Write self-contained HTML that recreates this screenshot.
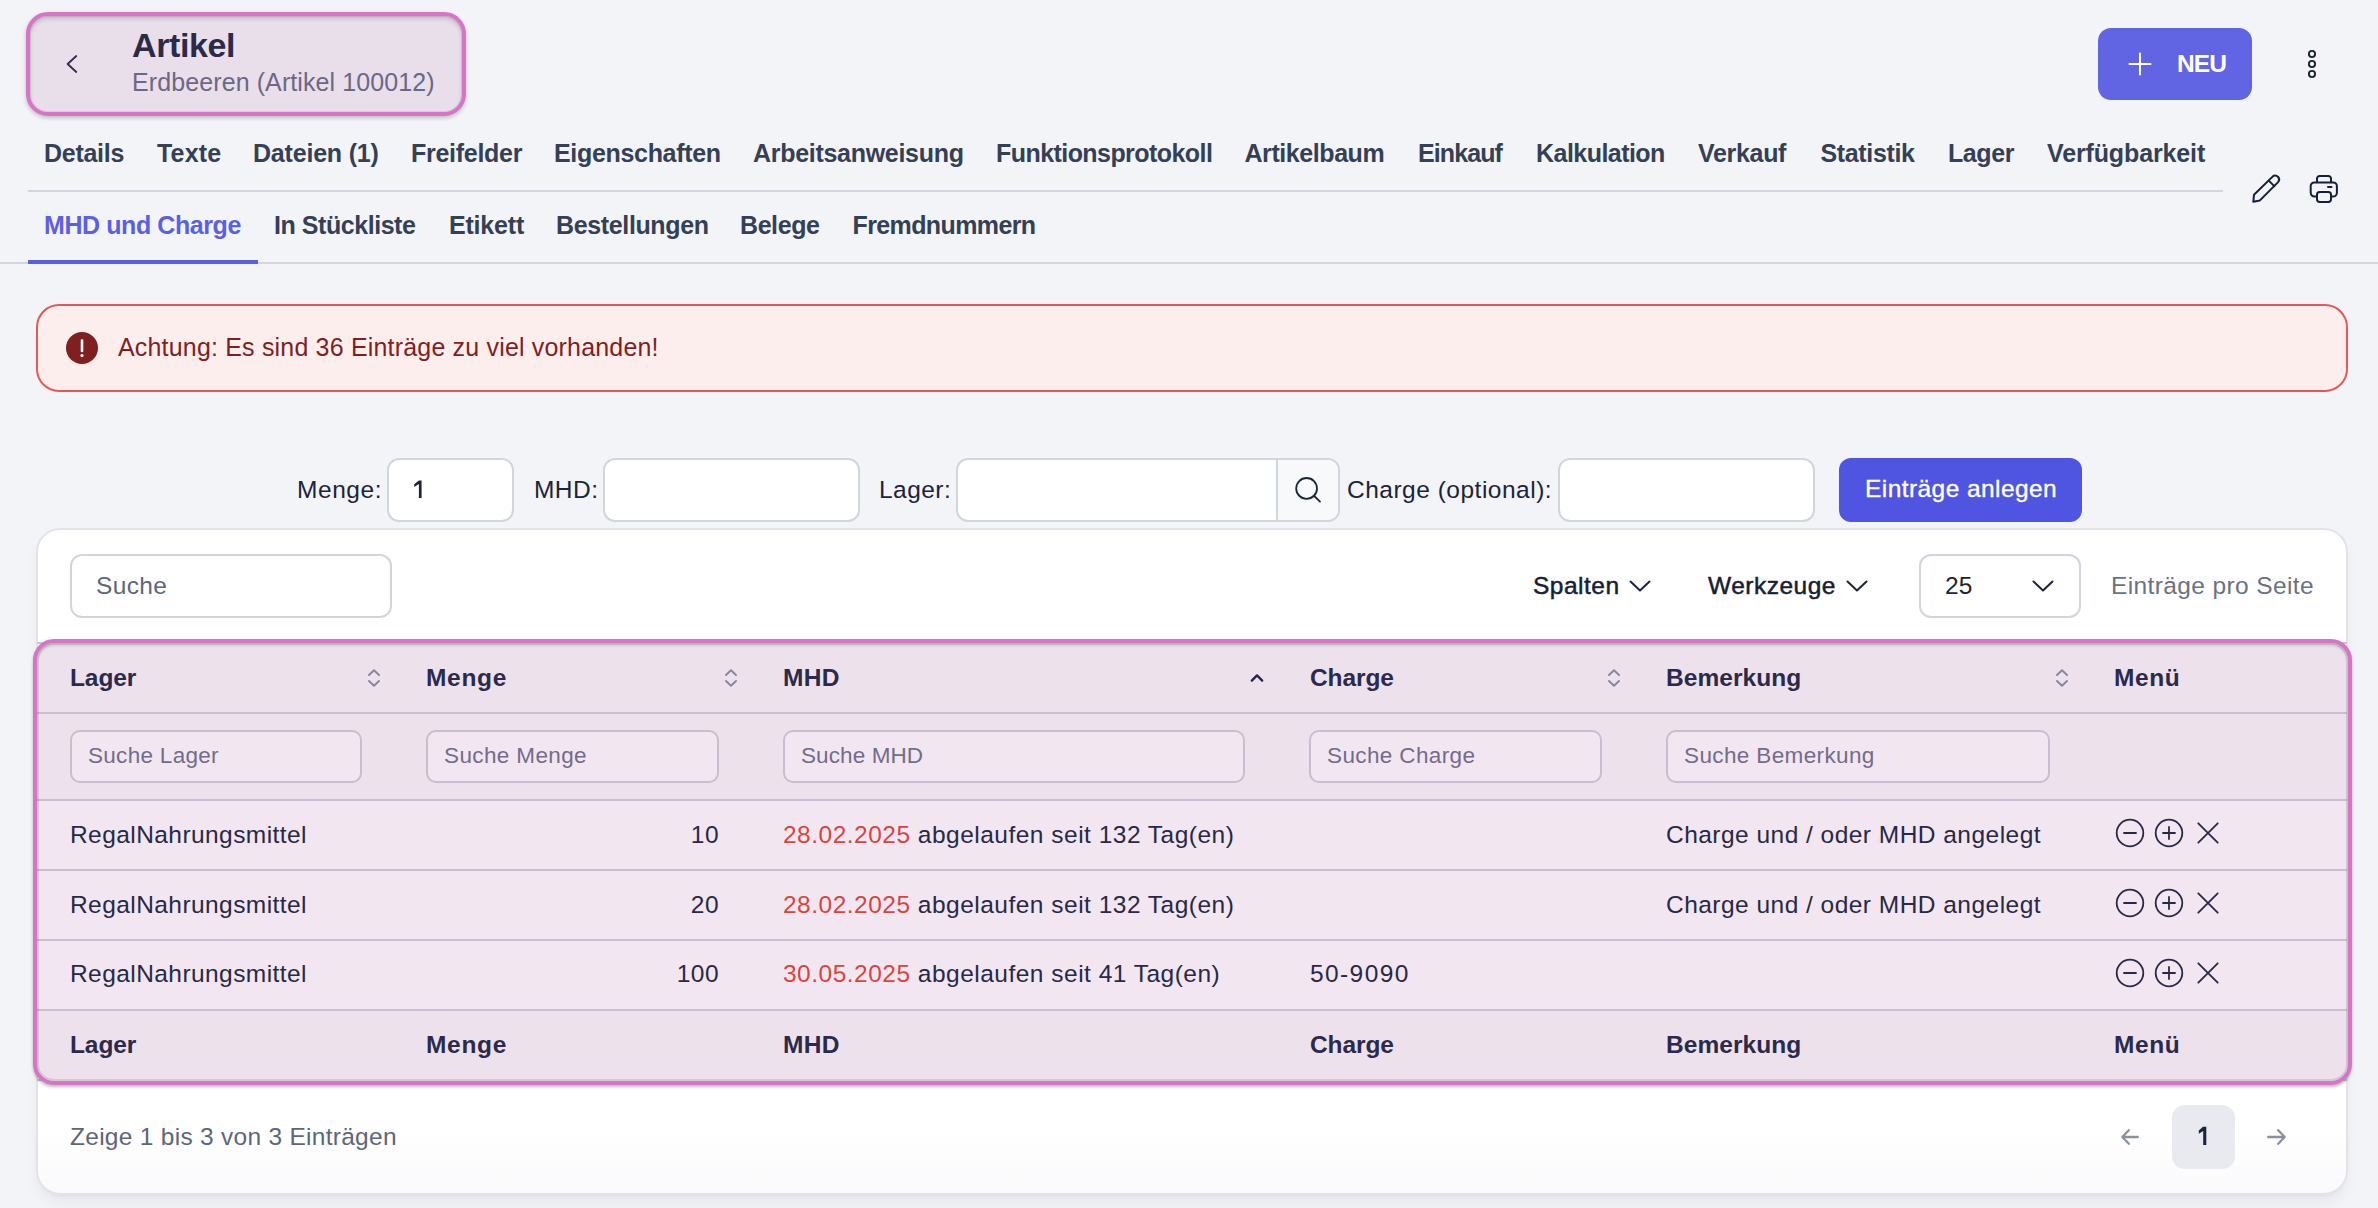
<!DOCTYPE html>
<html><head><meta charset="utf-8"><style>
html,body{margin:0;padding:0;}
body{width:2378px;height:1208px;overflow:hidden;background:#f3f4f8;position:relative;font-family:"Liberation Sans",sans-serif;}
.t{position:absolute;line-height:1;white-space:nowrap;}
svg{position:absolute;overflow:visible;}
</style></head><body>
<div style="position:absolute;left:26px;top:12px;width:440px;height:104px;box-sizing:border-box;border:4px solid #d874c7;border-radius:22px;background:#e8dfeb;box-shadow:0 2px 4px rgba(0,0,0,.22), inset 0 0 0 1px rgba(90,80,110,.12), inset 0 3px 4px rgba(0,0,0,.16);"></div>
<svg style="left:0;top:0" width="100" height="100" viewBox="0 0 100 100"><path d="M76.3 56 L67.6 64 L76.3 72" fill="none" stroke="#2f2c4a" stroke-width="1.8" stroke-linecap="round" stroke-linejoin="round"/></svg>
<div class="t" style="left:132px;top:28.22px;font-size:34px;color:#2d2a47;font-weight:700;letter-spacing:-0.4px;">Artikel</div>
<div class="t" style="left:132px;top:69.64px;font-size:25px;color:#6d6785;letter-spacing:0.1px;">Erdbeeren (Artikel 100012)</div>
<div style="position:absolute;left:2098px;top:28px;width:154px;height:72px;box-sizing:border-box;background:#6165e3;border-radius:13px;"></div>
<svg style="left:2120px;top:44px" width="40" height="40" viewBox="0 0 40 40"><path d="M20 9.5V30.5M9.5 20H30.5" stroke="#fff" stroke-width="2" stroke-linecap="round"/></svg>
<div class="t" style="left:2177px;top:51.76px;font-size:24.5px;color:#ffffff;font-weight:700;letter-spacing:-0.9px;">NEU</div>
<svg style="left:2300px;top:44px" width="24" height="40" viewBox="0 0 24 40"><g fill="none" stroke="#1a2236" stroke-width="1.9"><circle cx="12" cy="10" r="3.1"/><circle cx="12" cy="20" r="3.1"/><circle cx="12" cy="30" r="3.1"/></g></svg>
<div class="t" style="left:44px;top:141.24px;font-size:25px;color:#344055;font-weight:700;letter-spacing:-0.27px;">Details</div>
<div class="t" style="left:157px;top:141.24px;font-size:25px;color:#344055;font-weight:700;letter-spacing:0.17px;">Texte</div>
<div class="t" style="left:253px;top:141.24px;font-size:25px;color:#344055;font-weight:700;letter-spacing:-0.2px;">Dateien (1)</div>
<div class="t" style="left:411px;top:141.24px;font-size:25px;color:#344055;font-weight:700;letter-spacing:-0.28px;">Freifelder</div>
<div class="t" style="left:554px;top:141.24px;font-size:25px;color:#344055;font-weight:700;letter-spacing:-0.32px;">Eigenschaften</div>
<div class="t" style="left:753px;top:141.24px;font-size:25px;color:#344055;font-weight:700;letter-spacing:-0.29px;">Arbeitsanweisung</div>
<div class="t" style="left:996px;top:141.24px;font-size:25px;color:#344055;font-weight:700;letter-spacing:-0.56px;">Funktionsprotokoll</div>
<div class="t" style="left:1244.5px;top:141.24px;font-size:25px;color:#344055;font-weight:700;letter-spacing:-0.43px;">Artikelbaum</div>
<div class="t" style="left:1418px;top:141.24px;font-size:25px;color:#344055;font-weight:700;letter-spacing:-0.9px;">Einkauf</div>
<div class="t" style="left:1536px;top:141.24px;font-size:25px;color:#344055;font-weight:700;letter-spacing:-0.54px;">Kalkulation</div>
<div class="t" style="left:1698px;top:141.24px;font-size:25px;color:#344055;font-weight:700;letter-spacing:-0.32px;">Verkauf</div>
<div class="t" style="left:1820.5px;top:141.24px;font-size:25px;color:#344055;font-weight:700;letter-spacing:-0.35px;">Statistik</div>
<div class="t" style="left:1948px;top:141.24px;font-size:25px;color:#344055;font-weight:700;letter-spacing:-0.42px;">Lager</div>
<div class="t" style="left:2047px;top:141.24px;font-size:25px;color:#344055;font-weight:700;letter-spacing:-0.13px;">Verfügbarkeit</div>
<div style="position:absolute;left:28px;top:190px;width:2195px;height:2px;box-sizing:border-box;background:#d2d5dd;"></div>
<div class="t" style="left:44px;top:213.24px;font-size:25px;color:#5b5fe3;font-weight:700;letter-spacing:-0.42px;">MHD und Charge</div>
<div class="t" style="left:274px;top:213.24px;font-size:25px;color:#344055;font-weight:700;letter-spacing:-0.45px;">In Stückliste</div>
<div class="t" style="left:449px;top:213.24px;font-size:25px;color:#344055;font-weight:700;letter-spacing:-0.2px;">Etikett</div>
<div class="t" style="left:556px;top:213.24px;font-size:25px;color:#344055;font-weight:700;letter-spacing:-0.36px;">Bestellungen</div>
<div class="t" style="left:740px;top:213.24px;font-size:25px;color:#344055;font-weight:700;letter-spacing:-0.42px;">Belege</div>
<div class="t" style="left:852.5px;top:213.24px;font-size:25px;color:#344055;font-weight:700;letter-spacing:-0.61px;">Fremdnummern</div>
<div style="position:absolute;left:0px;top:262px;width:2378px;height:2px;box-sizing:border-box;background:#d3d6de;"></div>
<div style="position:absolute;left:28px;top:260px;width:230px;height:4px;box-sizing:border-box;background:#5b5fe3;"></div>
<svg style="left:2240px;top:160px" width="110" height="55" viewBox="0 0 110 55"><g fill="none" stroke="#14203a" stroke-width="2" stroke-linejoin="round" stroke-linecap="round">
<path d="M14 34.8 L32.6 16.6 A3.9 3.9 0 0 1 38.1 22.1 L19.9 40.4 L13.3 41.8 Z"/><path d="M28.8 20.6 L34.3 26.1"/>
<path d="M77 22.3 V18.6 A2.7 2.7 0 0 1 79.7 15.9 H88.3 A2.7 2.7 0 0 1 91 18.6 V22.3"/>
<path d="M77 36.6 H74.5 A3.8 3.8 0 0 1 70.7 32.8 V26.1 A3.6 3.6 0 0 1 74.3 22.5 H93.3 A3.6 3.6 0 0 1 96.9 26.1 V32.8 A3.8 3.8 0 0 1 93.1 36.6 H91"/>
<rect x="77" y="31.9" width="14" height="10" rx="2.7"/>
<path d="M88 27 H91.5"/>
</g></svg>
<div style="position:absolute;left:36px;top:304px;width:2312px;height:88px;box-sizing:border-box;border:2px solid #e05a5a;border-radius:23px;background:#fdeeee;"></div>
<svg style="left:66px;top:332px" width="32" height="32" viewBox="0 0 32 32"><circle cx="16" cy="16" r="16" fill="#7f1f1f"/><path d="M16 8.5V19" stroke="#fff" stroke-width="2.6" stroke-linecap="round"/><circle cx="16" cy="23.6" r="1.6" fill="#fff"/></svg>
<div class="t" style="left:118px;top:335.34px;font-size:25px;color:#7f1f1f;letter-spacing:0.18px;">Achtung: Es sind 36 Einträge zu viel vorhanden!</div>
<div class="t" style="left:297px;top:477.76px;font-size:24.5px;color:#1b2438;letter-spacing:0.55px;">Menge:</div>
<div style="position:absolute;left:387px;top:458px;width:127px;height:64px;box-sizing:border-box;background:#fff;border:2px solid #d1d5dc;border-radius:12px;"></div>
<svg style="left:0;top:0" width="700" height="600" viewBox="0 0 700 600"><path d="M421.6 480.5 V497.9 H418.9 V483.9 L414.2 487 V484.3 L418.9 480.5 Z" fill="#1b2438"/></svg>
<div class="t" style="left:534px;top:477.76px;font-size:24.5px;color:#1b2438;letter-spacing:0.45px;">MHD:</div>
<div style="position:absolute;left:603px;top:458px;width:257px;height:64px;box-sizing:border-box;background:#fff;border:2px solid #d1d5dc;border-radius:12px;"></div>
<div class="t" style="left:879px;top:477.76px;font-size:24.5px;color:#1b2438;letter-spacing:0.45px;">Lager:</div>
<div style="position:absolute;left:956px;top:458px;width:384px;height:64px;box-sizing:border-box;background:#fff;border:2px solid #d1d5dc;border-radius:12px;overflow:hidden;"></div>
<div style="position:absolute;left:1276px;top:460px;width:62px;height:60px;box-sizing:border-box;background:#f8f9fb;border-left:2px solid #d1d5dc;border-radius:0 10px 10px 0;"></div>
<svg style="left:1290px;top:472px" width="36" height="36" viewBox="0 0 36 36"><g fill="none" stroke="#1b2438" stroke-width="1.8" stroke-linecap="round"><circle cx="16.6" cy="16.4" r="10.4"/><path d="M24.2 24 L30 29.6"/></g></svg>
<div class="t" style="left:1347px;top:477.76px;font-size:24.5px;color:#1b2438;letter-spacing:0.5px;">Charge (optional):</div>
<div style="position:absolute;left:1558px;top:458px;width:257px;height:64px;box-sizing:border-box;background:#fff;border:2px solid #d1d5dc;border-radius:12px;"></div>
<div style="position:absolute;left:1839px;top:458px;width:243px;height:64px;box-sizing:border-box;background:#4f55e0;border-radius:12px;"></div>
<div class="t" style="left:1865px;top:477.46px;font-size:24.5px;color:#ffffff;letter-spacing:0.43px;-webkit-text-stroke:0.35px #fff;">Einträge anlegen</div>
<div style="position:absolute;left:36px;top:528px;width:2312px;height:667px;box-sizing:border-box;background:linear-gradient(to bottom,#fff 0,#fff 600px,#fafafc 100%);border:2px solid #e1e3e9;border-radius:24px;box-shadow:0 10px 15px -3px rgba(0,0,0,.06), 0 2px 3px -1px rgba(0,0,0,.04);"></div>
<div style="position:absolute;left:70px;top:554px;width:322px;height:64px;box-sizing:border-box;background:#fff;border:2px solid #d1d5dc;border-radius:12px;"></div>
<div class="t" style="left:96px;top:573.76px;font-size:24.5px;color:#5d6679;letter-spacing:0.37px;">Suche</div>
<div class="t" style="left:1533px;top:573.76px;font-size:24.5px;color:#172033;letter-spacing:0.5px;-webkit-text-stroke:0.5px #172033;">Spalten</div>
<svg style="left:1628px;top:578px" width="24" height="16" viewBox="0 0 24 16"><path d="M2.5 3.5 L12 12.5 L21.5 3.5" fill="none" stroke="#1b2438" stroke-width="2" stroke-linecap="round" stroke-linejoin="round"/></svg>
<div class="t" style="left:1708px;top:573.76px;font-size:24.5px;color:#172033;letter-spacing:0.5px;-webkit-text-stroke:0.5px #172033;">Werkzeuge</div>
<svg style="left:1845px;top:578px" width="24" height="16" viewBox="0 0 24 16"><path d="M2.5 3.5 L12 12.5 L21.5 3.5" fill="none" stroke="#1b2438" stroke-width="2" stroke-linecap="round" stroke-linejoin="round"/></svg>
<div style="position:absolute;left:1919px;top:554px;width:162px;height:64px;box-sizing:border-box;background:#fff;border:2px solid #d1d5dc;border-radius:12px;"></div>
<div class="t" style="left:1945px;top:573.76px;font-size:24.5px;color:#1b2438;">25</div>
<svg style="left:2031px;top:578px" width="24" height="16" viewBox="0 0 24 16"><path d="M2.5 3.5 L12 12.5 L21.5 3.5" fill="none" stroke="#1b2438" stroke-width="2" stroke-linecap="round" stroke-linejoin="round"/></svg>
<div class="t" style="left:2111px;top:573.76px;font-size:24.5px;color:#6a7282;letter-spacing:0.38px;">Einträge pro Seite</div>
<div style="position:absolute;left:37px;top:642px;width:2310px;height:2px;box-sizing:border-box;background:#c6c8d0;"></div>
<div style="position:absolute;left:37px;top:1079px;width:2310px;height:2px;box-sizing:border-box;background:#c6c8d0;"></div>
<div style="position:absolute;left:33px;top:639px;width:2319px;height:446px;box-sizing:border-box;border:4px solid #d874c7;border-radius:21px;background:#ede2eb;box-shadow:0 2px 3px rgba(0,0,0,.26);overflow:hidden;"></div>
<div style="position:absolute;left:37px;top:801px;width:2310px;height:208px;box-sizing:border-box;background:#f2e7f1;"></div>
<div style="position:absolute;left:37px;top:712px;width:2310px;height:2px;box-sizing:border-box;background:#cabfd0;"></div>
<div style="position:absolute;left:37px;top:799px;width:2310px;height:2px;box-sizing:border-box;background:#cabfd0;"></div>
<div style="position:absolute;left:37px;top:869px;width:2310px;height:2px;box-sizing:border-box;background:#cabfd0;"></div>
<div style="position:absolute;left:37px;top:939px;width:2310px;height:2px;box-sizing:border-box;background:#cabfd0;"></div>
<div style="position:absolute;left:37px;top:1009px;width:2310px;height:2px;box-sizing:border-box;background:#cabfd0;"></div>
<div style="position:absolute;left:37px;top:643px;width:2311px;height:438px;box-sizing:border-box;border-radius:17px;box-shadow:inset 0 0 0 2px rgba(80,70,100,.16), inset 0 3px 3px rgba(0,0,0,.12);"></div>
<div class="t" style="left:70px;top:665.76px;font-size:24.5px;color:#2b2a4c;font-weight:700;letter-spacing:-0.1px;">Lager</div>
<div class="t" style="left:70px;top:1032.56px;font-size:24.5px;color:#2b2a4c;font-weight:700;letter-spacing:-0.1px;">Lager</div>
<div class="t" style="left:426px;top:665.76px;font-size:24.5px;color:#2b2a4c;font-weight:700;letter-spacing:0.7px;">Menge</div>
<div class="t" style="left:426px;top:1032.56px;font-size:24.5px;color:#2b2a4c;font-weight:700;letter-spacing:0.7px;">Menge</div>
<div class="t" style="left:783px;top:665.76px;font-size:24.5px;color:#2b2a4c;font-weight:700;letter-spacing:0.3px;">MHD</div>
<div class="t" style="left:783px;top:1032.56px;font-size:24.5px;color:#2b2a4c;font-weight:700;letter-spacing:0.3px;">MHD</div>
<div class="t" style="left:1310px;top:665.76px;font-size:24.5px;color:#2b2a4c;font-weight:700;letter-spacing:-0.1px;">Charge</div>
<div class="t" style="left:1310px;top:1032.56px;font-size:24.5px;color:#2b2a4c;font-weight:700;letter-spacing:-0.1px;">Charge</div>
<div class="t" style="left:1666px;top:665.76px;font-size:24.5px;color:#2b2a4c;font-weight:700;letter-spacing:0.05px;">Bemerkung</div>
<div class="t" style="left:1666px;top:1032.56px;font-size:24.5px;color:#2b2a4c;font-weight:700;letter-spacing:0.05px;">Bemerkung</div>
<div class="t" style="left:2114px;top:665.76px;font-size:24.5px;color:#2b2a4c;font-weight:700;letter-spacing:0.55px;">Menü</div>
<div class="t" style="left:2114px;top:1032.56px;font-size:24.5px;color:#2b2a4c;font-weight:700;letter-spacing:0.55px;">Menü</div>
<svg style="left:365px;top:667px" width="16" height="22" viewBox="0 0 16 22"><path d="M4 8 L9 3.2 L14 8 M4 14 L9 18.8 L14 14" fill="none" stroke="#8a859e" stroke-width="1.9" stroke-linecap="round" stroke-linejoin="round"/></svg>
<svg style="left:722px;top:667px" width="16" height="22" viewBox="0 0 16 22"><path d="M4 8 L9 3.2 L14 8 M4 14 L9 18.8 L14 14" fill="none" stroke="#8a859e" stroke-width="1.9" stroke-linecap="round" stroke-linejoin="round"/></svg>
<svg style="left:1605px;top:667px" width="16" height="22" viewBox="0 0 16 22"><path d="M4 8 L9 3.2 L14 8 M4 14 L9 18.8 L14 14" fill="none" stroke="#8a859e" stroke-width="1.9" stroke-linecap="round" stroke-linejoin="round"/></svg>
<svg style="left:2053px;top:667px" width="16" height="22" viewBox="0 0 16 22"><path d="M4 8 L9 3.2 L14 8 M4 14 L9 18.8 L14 14" fill="none" stroke="#8a859e" stroke-width="1.9" stroke-linecap="round" stroke-linejoin="round"/></svg>
<svg style="left:1248px;top:668px" width="18" height="18" viewBox="0 0 18 18"><path d="M3.8 12.6 L9 7.4 L14.2 12.6" fill="none" stroke="#24244a" stroke-width="2.3" stroke-linecap="round" stroke-linejoin="round"/></svg>
<div style="position:absolute;left:70px;top:730px;width:292px;height:53px;box-sizing:border-box;background:#f2e7f1;border:2px solid #c9bdd0;border-radius:10px;"></div>
<div class="t" style="left:88px;top:745.45px;font-size:22.5px;color:#716c8a;letter-spacing:0.3px;">Suche Lager</div>
<div style="position:absolute;left:426px;top:730px;width:293px;height:53px;box-sizing:border-box;background:#f2e7f1;border:2px solid #c9bdd0;border-radius:10px;"></div>
<div class="t" style="left:444px;top:745.45px;font-size:22.5px;color:#716c8a;letter-spacing:0.37px;">Suche Menge</div>
<div style="position:absolute;left:783px;top:730px;width:462px;height:53px;box-sizing:border-box;background:#f2e7f1;border:2px solid #c9bdd0;border-radius:10px;"></div>
<div class="t" style="left:801px;top:745.45px;font-size:22.5px;color:#716c8a;letter-spacing:0.1px;">Suche MHD</div>
<div style="position:absolute;left:1309px;top:730px;width:293px;height:53px;box-sizing:border-box;background:#f2e7f1;border:2px solid #c9bdd0;border-radius:10px;"></div>
<div class="t" style="left:1327px;top:745.45px;font-size:22.5px;color:#716c8a;letter-spacing:0.37px;">Suche Charge</div>
<div style="position:absolute;left:1666px;top:730px;width:384px;height:53px;box-sizing:border-box;background:#f2e7f1;border:2px solid #c9bdd0;border-radius:10px;"></div>
<div class="t" style="left:1684px;top:745.45px;font-size:22.5px;color:#716c8a;letter-spacing:0.37px;">Suche Bemerkung</div>
<div class="t" style="left:70px;top:822.66px;font-size:24.5px;color:#272946;letter-spacing:0.43px;">RegalNahrungsmittel</div>
<div class="t" style="right:1659px;top:822.66px;font-size:24.5px;color:#272946;letter-spacing:0.45px;">10</div>
<div class="t" style="left:783px;top:822.66px;font-size:24.5px;color:#272946;letter-spacing:0.49px;"><span style="color:#d9443f">28.02.2025</span> abgelaufen seit 132 Tag(en)</div>
<div class="t" style="left:1666px;top:822.66px;font-size:24.5px;color:#272946;letter-spacing:0.47px;">Charge und / oder MHD angelegt</div>
<svg style="left:2110px;top:812.9px" width="120" height="40" viewBox="0 0 120 40"><g fill="none" stroke="#272946" stroke-width="1.8" stroke-linecap="round"><circle cx="20" cy="20" r="13.3"/><path d="M14 20H26"/><circle cx="59" cy="20" r="13.3"/><path d="M53 20H65M59 14V26"/><path d="M88.3 10.3L107.7 29.7M107.7 10.3L88.3 29.7"/></g></svg>
<div class="t" style="left:70px;top:892.66px;font-size:24.5px;color:#272946;letter-spacing:0.43px;">RegalNahrungsmittel</div>
<div class="t" style="right:1659px;top:892.66px;font-size:24.5px;color:#272946;letter-spacing:0.45px;">20</div>
<div class="t" style="left:783px;top:892.66px;font-size:24.5px;color:#272946;letter-spacing:0.49px;"><span style="color:#d9443f">28.02.2025</span> abgelaufen seit 132 Tag(en)</div>
<div class="t" style="left:1666px;top:892.66px;font-size:24.5px;color:#272946;letter-spacing:0.47px;">Charge und / oder MHD angelegt</div>
<svg style="left:2110px;top:882.9px" width="120" height="40" viewBox="0 0 120 40"><g fill="none" stroke="#272946" stroke-width="1.8" stroke-linecap="round"><circle cx="20" cy="20" r="13.3"/><path d="M14 20H26"/><circle cx="59" cy="20" r="13.3"/><path d="M53 20H65M59 14V26"/><path d="M88.3 10.3L107.7 29.7M107.7 10.3L88.3 29.7"/></g></svg>
<div class="t" style="left:70px;top:962.46px;font-size:24.5px;color:#272946;letter-spacing:0.43px;">RegalNahrungsmittel</div>
<div class="t" style="right:1659px;top:962.46px;font-size:24.5px;color:#272946;letter-spacing:0.45px;">100</div>
<div class="t" style="left:783px;top:962.46px;font-size:24.5px;color:#272946;letter-spacing:0.49px;"><span style="color:#d9443f">30.05.2025</span> abgelaufen seit 41 Tag(en)</div>
<div class="t" style="left:1310px;top:962.46px;font-size:24.5px;color:#272946;letter-spacing:1.4px;">50-9090</div>
<svg style="left:2110px;top:952.7px" width="120" height="40" viewBox="0 0 120 40"><g fill="none" stroke="#272946" stroke-width="1.8" stroke-linecap="round"><circle cx="20" cy="20" r="13.3"/><path d="M14 20H26"/><circle cx="59" cy="20" r="13.3"/><path d="M53 20H65M59 14V26"/><path d="M88.3 10.3L107.7 29.7M107.7 10.3L88.3 29.7"/></g></svg>
<div class="t" style="left:70px;top:1124.96px;font-size:24.5px;color:#5d6679;letter-spacing:0.28px;">Zeige 1 bis 3 von 3 Einträgen</div>
<div style="position:absolute;left:2172px;top:1105px;width:63px;height:64px;box-sizing:border-box;background:#e9eaef;border-radius:13px;"></div>
<svg style="left:0;top:0" width="2378" height="1208" viewBox="0 0 2378 1208"><path d="M2206.3 1126.8 V1145 H2203.2 V1130.9 L2198.8 1133.7 V1130.6 L2203 1126.8 Z" fill="#1b2438"/></svg>
<svg style="left:2110px;top:1120px" width="40" height="34" viewBox="0 0 40 34"><path d="M27.8 17H13M18.8 10.2L12.3 17L18.8 23.8" fill="none" stroke="#8a909c" stroke-width="2.3" stroke-linecap="round" stroke-linejoin="round"/></svg>
<svg style="left:2257px;top:1120px" width="40" height="34" viewBox="0 0 40 34"><path d="M11.2 17H26.5M21.2 10.2L27.7 17L21.2 23.8" fill="none" stroke="#8a909c" stroke-width="2.3" stroke-linecap="round" stroke-linejoin="round"/></svg>
</body></html>
